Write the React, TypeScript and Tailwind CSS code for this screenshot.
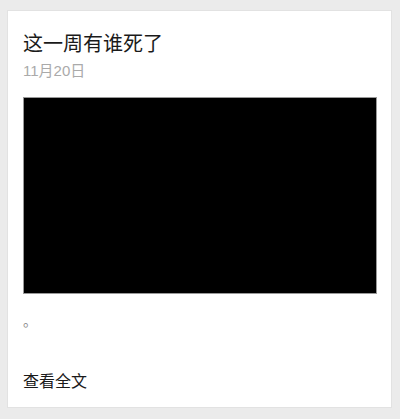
export default function App() {
  return (
    <div className="w-[400px] h-[419px] bg-[#ebebeb] pt-[10px] pl-[7px]" style={{ fontFamily: '"Noto Sans CJK SC", "Liberation Sans", sans-serif' }}>
      <div className="w-[385px] h-[398px] bg-white border border-[#e2e2e2] pt-[18px] px-[15px]">
        <div className="text-[20px] leading-[28px] text-[#1a1a1a]">这一周有谁死了</div>
        <div className="mt-[4px] text-[15px] leading-[20px] text-[#aaaaaa]" style={{ fontFamily: '"Liberation Sans", "Noto Sans CJK SC", sans-serif' }}>11月20日</div>
        <div className="mt-[16px] w-[354px] h-[197px] bg-black border border-[#999]" />
        <div className="mt-[16px] text-[14px] leading-[20px] text-[#888]">。</div>
        <div className="mt-[38px] text-[16px] leading-[24px] text-[#1a1a1a]">查看全文</div>
      </div>
    </div>
  );
}
